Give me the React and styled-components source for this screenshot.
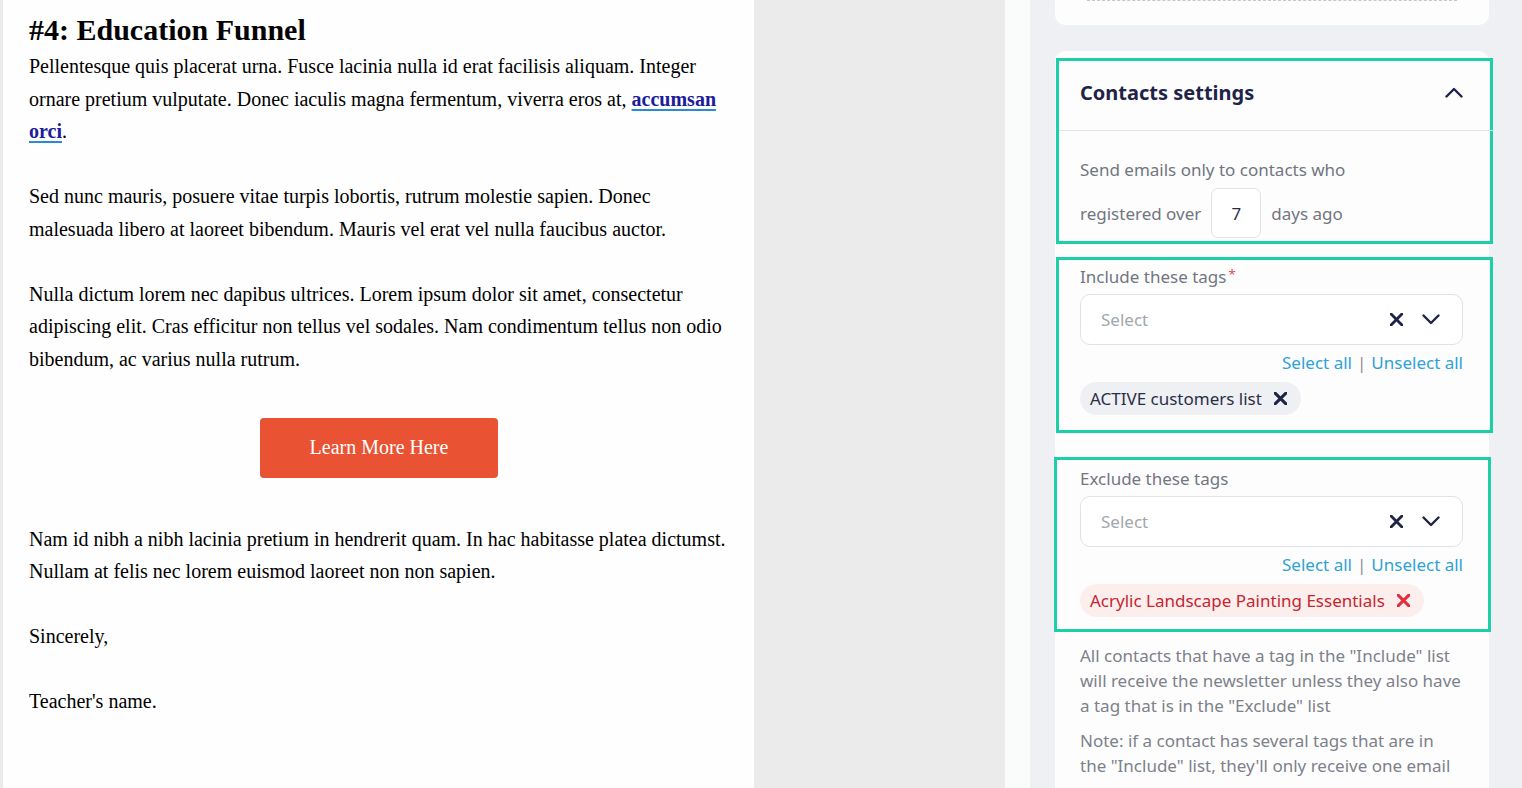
import React from 'react';
import styled, { createGlobalStyle } from 'styled-components';

const GlobalStyle = createGlobalStyle`
  html, body { margin: 0; padding: 0; }
  body { background: #ebebeb; overflow: hidden; }
  * { box-sizing: border-box; }
`;

const Page = styled.div`
  display: flex;
  height: 788px;
  width: 1522px;
  overflow: hidden;
  background: #ebebeb;
`;

const Email = styled.div`
  width: 751px;
  margin-left: 3px;
  background: #fefefe;
  padding: 12px 0 0 26px;
  font-family: "Liberation Serif", "Times New Roman", serif;
  color: #000;
`;

const Content = styled.div`
  width: 705px;
`;

const Heading = styled.h1`
  margin: 0 0 2px;
  font-size: 30px;
  line-height: 36px;
  font-weight: 700;
`;

const Para = styled.p`
  margin: 0 0 ${(p) => (p.$last ? '0' : '32.5px')};
  font-size: 20px;
  line-height: 32.5px;
`;

const Link = styled.a`
  color: #1c1c9c;
  font-weight: 700;
  text-decoration: underline;
  text-decoration-color: #2b8ad6;
  text-decoration-thickness: 2px;
  text-underline-offset: 3px;
`;

const ButtonWrap = styled.div`
  display: flex;
  justify-content: center;
  padding: 42.5px 5px 45px 0;
`;

const CtaButton = styled.a`
  display: flex;
  align-items: center;
  justify-content: center;
  width: 238px;
  height: 60px;
  background: #e95232;
  border-radius: 4px;
  color: #fff;
  font-size: 20px;
  text-decoration: none;
`;

const Gap = styled.div`
  width: 251px;
  background: #ebebeb;
`;

const Strip = styled.div`
  width: 25px;
  background: #fafbfb;
`;

const Panel = styled.div`
  width: 492px;
  background: #eef0f3;
  padding-left: 25px;
  display: flex;
  flex-direction: column;
  gap: 26px;
  font-family: "Noto Sans", "Open Sans", sans-serif;
`;

const TopCard = styled.div`
  width: 434px;
  height: 25px;
  background: #fdfdfe;
  border-radius: 0 0 10px 10px;
  padding: 0 32px;
`;

const Dashed = styled.div`
  border-top: 1px dashed #c3c7cc;
`;

const Card = styled.div`
  width: 434px;
  flex: 1;
  background: #fdfdfe;
  border-radius: 10px 10px 0 0;
  padding-top: 7px;
`;

const Highlight = styled.section`
  width: 437px;
  margin-left: ${(p) => p.$shift ?? 1}px;
  margin-bottom: ${(p) => p.$after ?? 0}px;
  border: 3px solid #1ccfa6;
  padding: ${(p) => p.$pad || '0'};
`;

const Header = styled.div`
  height: 70px;
  display: flex;
  align-items: center;
  justify-content: space-between;
  padding: 0 31px 6px 21px;
  border-bottom: 1px solid #dfe2e6;
  margin-right: -4px;
`;

const Title = styled.h2`
  margin: 0;
  font-size: 20px;
  font-weight: 700;
  color: #1e2347;
`;

const SettingsBody = styled.div`
  padding: 27px 21px 3px;
  color: #72767f;
  font-size: 17px;
`;

const Line = styled.div`
  line-height: 24px;
`;

const InlineRow = styled.div`
  display: flex;
  align-items: center;
  gap: 10px;
  margin-top: 6px;
`;

const DaysInput = styled.div`
  width: 50px;
  height: 50px;
  border: 1px solid #e0e3e7;
  border-radius: 7px;
  display: flex;
  align-items: center;
  justify-content: center;
  color: #2b2f45;
  background: #fff;
`;

const Label = styled.div`
  font-size: 17px;
  line-height: 22px;
  color: #72767f;
`;

const Required = styled.sup`
  color: #e0475a;
  font-size: 13px;
  margin-left: 2px;
  vertical-align: 4px;
  line-height: 0;
`;

const SelectBox = styled.div`
  margin-top: 6px;
  height: 51px;
  border: 1px solid #dfe2e6;
  border-radius: 10px;
  background: #fff;
  display: flex;
  align-items: center;
  padding: 0 22px 0 20px;
  gap: 19px;
`;

const Placeholder = styled.span`
  flex: 1;
  color: #a3a7ae;
  font-size: 17px;
`;

const Links = styled.div`
  margin-top: 7px;
  text-align: right;
  font-size: 17px;
  line-height: 22px;
  color: #2ea2d5;
`;

const Sep = styled.span`
  color: #8a8e96;
  margin: 0 5px;
`;

const Chip = styled.div`
  margin-top: 8px;
  display: inline-flex;
  align-items: center;
  gap: 12px;
  height: 33px;
  padding: 0 14px 0 10px;
  border-radius: 17px;
  font-size: 17px;
  background: ${(p) => (p.$danger ? '#fdeeee' : '#eef0f4')};
  color: ${(p) => (p.$danger ? '#c4262e' : '#2b2f45')};
`;

const Notes = styled.div`
  padding: 11px 25px 0;
  color: #7d818a;
  font-size: 17px;
  line-height: 25px;
`;

const Note = styled.p`
  margin: 0 0 10px;
`;

const Cross = ({ size = 12, color = '#1e2347', width = 2.6 }) => (
  <svg width={size} height={size} viewBox="0 0 12 12">
    <path d="M1 1L11 11M11 1L1 11" stroke={color} strokeWidth={width} strokeLinecap="round" fill="none" />
  </svg>
);

const Chevron = ({ up }) => (
  <svg width="18" height="11" viewBox="0 0 18 11">
    <path d={up ? 'M1.5 9.5L9 2L16.5 9.5' : 'M1.5 1.5L9 9L16.5 1.5'} stroke="#1e2347" strokeWidth="2.4" strokeLinecap="round" strokeLinejoin="round" fill="none" />
  </svg>
);

const TagPicker = ({ label, required, chip, danger }) => (
  <>
    <Label>
      {label}
      {required && <Required>*</Required>}
    </Label>
    <SelectBox>
      <Placeholder>Select</Placeholder>
      <Cross size={13} />
      <Chevron />
    </SelectBox>
    <Links>
      Select all<Sep>|</Sep>Unselect all
    </Links>
    <Chip $danger={danger}>
      {chip}
      <Cross size={13} color={danger ? '#e0303a' : '#1e2347'} width={2.8} />
    </Chip>
  </>
);

const App = () => (
  <>
    <GlobalStyle />
    <Page>
      <Email>
        <Content>
          <Heading>#4: Education Funnel</Heading>
          <Para>
            Pellentesque quis placerat urna. Fusce lacinia nulla id erat facilisis aliquam. Integer ornare pretium
            vulputate. Donec iaculis magna fermentum, viverra eros at, <Link href="#">accumsan orci</Link>.
          </Para>
          <Para>
            Sed nunc mauris, posuere vitae turpis lobortis, rutrum molestie sapien. Donec malesuada libero at
            laoreet bibendum. Mauris vel erat vel nulla faucibus auctor.
          </Para>
          <Para $last>
            Nulla dictum lorem nec dapibus ultrices. Lorem ipsum dolor sit amet, consectetur adipiscing elit. Cras
            efficitur non tellus vel sodales. Nam condimentum tellus non odio bibendum, ac varius nulla rutrum.
          </Para>
          <ButtonWrap>
            <CtaButton href="#">Learn More Here</CtaButton>
          </ButtonWrap>
          <Para>
            Nam id nibh a nibh lacinia pretium in hendrerit quam. In hac habitasse platea dictumst. Nullam at felis
            nec lorem euismod laoreet non non sapien.
          </Para>
          <Para>Sincerely,</Para>
          <Para>Teacher's name.</Para>
        </Content>
      </Email>
      <Gap />
      <Strip />
      <Panel>
        <TopCard>
          <Dashed />
        </TopCard>
        <Card>
          <Highlight $after={13}>
            <Header>
              <Title>Contacts settings</Title>
              <Chevron up />
            </Header>
            <SettingsBody>
              <Line>Send emails only to contacts who</Line>
              <InlineRow>
                <span>registered over</span>
                <DaysInput>7</DaysInput>
                <span>days ago</span>
              </InlineRow>
            </SettingsBody>
          </Highlight>
          <Highlight $after={24} $pad="6px 27px 15px 21px">
            <TagPicker label="Include these tags" required chip="ACTIVE customers list" />
          </Highlight>
          <Highlight $shift={-1} $pad="8px 25px 12px 23px">
            <TagPicker label="Exclude these tags" chip="Acrylic Landscape Painting Essentials" danger />
          </Highlight>
          <Notes>
            <Note>
              All contacts that have a tag in the "Include" list will receive the newsletter unless they also have a
              tag that is in the "Exclude" list
            </Note>
            <Note>Note: if a contact has several tags that are in the "Include" list, they'll only receive one email</Note>
          </Notes>
        </Card>
      </Panel>
    </Page>
  </>
);

export default App;
